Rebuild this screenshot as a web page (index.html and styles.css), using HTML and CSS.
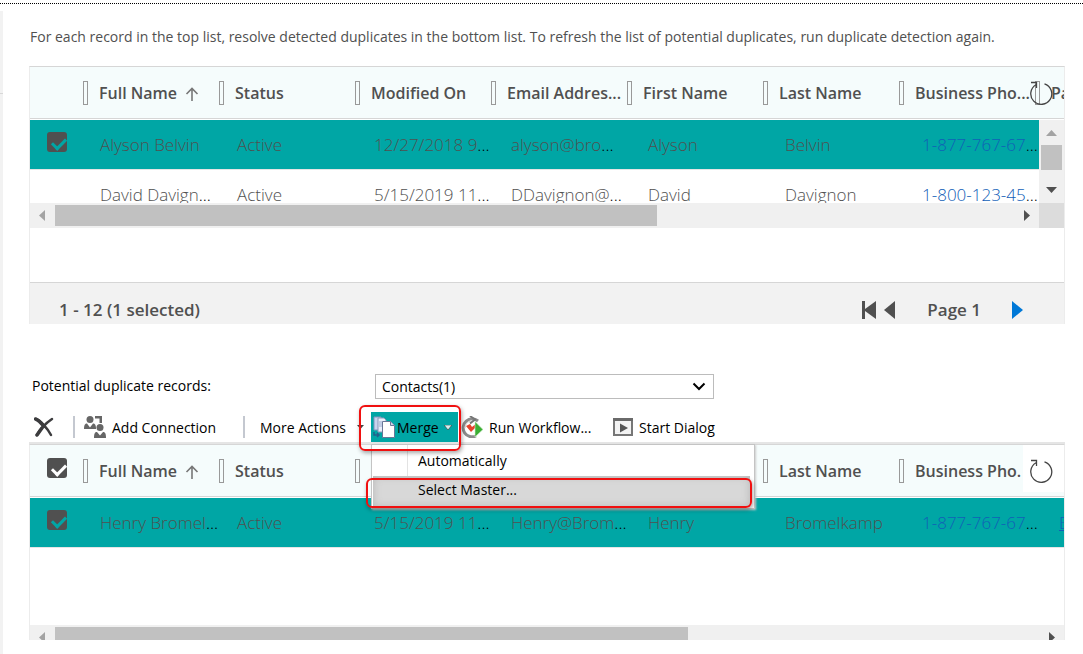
FILE: index.html
```html
<!DOCTYPE html>
<html lang="en">
<head>
<meta charset="utf-8">
<title>Duplicate records</title>
<link rel="stylesheet" href="styles.css">
</head>
<body>
<div class="top-rule"></div>
<div class="page">
<aside class="rail"><div class="rail-line"></div></aside>
<main class="content">
  <p class="intro">For each record in the top list, resolve detected duplicates in the bottom list. To refresh the list of potential duplicates, run duplicate detection again.</p>

  <section class="panel panel-top">
    <button class="refresh" aria-label="Refresh"><svg width="24" height="26" viewBox="0 0 24 26"><path d="M15.500 3.800A10.500 10.500 0 1 1 7 4.700M2 2.500h5.500v5.500" fill="none" stroke="#444" stroke-width="1.300"/></svg></button>
    <div class="grid-body">
      <table class="grid">
        <thead><tr>
          <th class="pick"></th>
          <th>Full Name <svg class="sort" width="14" height="16" viewBox="0 0 14 16"><path d="M7 15V2.500M1.500 8L7 2.500L12.500 8" fill="none" stroke="#777" stroke-width="1.600"/></svg></th>
          <th>Status</th><th>Modified On</th><th>Email Addres...</th><th>First Name</th><th>Last Name</th><th>Business Pho...</th><th>Parent</th>
        </tr></thead>
        <tbody>
          <tr class="selected"><td class="pick"><input type="checkbox" checked aria-label="Alyson Belvin"></td><td>Alyson Belvin</td><td>Active</td><td>12/27/2018 9<i>...</i></td><td>alyson@bro<i>...</i></td><td>Alyson</td><td>Belvin</td><td><a href="#">1-877-767-67</a><i>...</i></td><td></td></tr>
          <tr><td class="pick"></td><td>David Davign<i>...</i></td><td>Active</td><td>5/15/2019 11<i>...</i></td><td>DDavignon@<i>...</i></td><td>David</td><td>Davignon</td><td><a href="#">1-800-123-45</a><i>...</i></td><td></td></tr>
        </tbody>
      </table>
      <div class="vbar"><svg width="11" height="6" viewBox="0 0 11 6"><path d="M0 6L5.500 0L11 6z" fill="#a3a3a3"/></svg><div class="vthumb"></div><svg width="11" height="6" viewBox="0 0 11 6"><path d="M0 0L5.500 6L11 0z" fill="#505050"/></svg></div>
    </div>
    <div class="hbar"><div class="htrack"><svg width="6" height="11" viewBox="0 0 6 11"><path d="M6 0L0 5.500L6 11z" fill="#a3a3a3"/></svg><div class="hrun"><div class="hthumb" style="width:62.800%"></div></div><svg width="6" height="11" viewBox="0 0 6 11"><path d="M0 0L6 5.500L0 11z" fill="#505050"/></svg></div><div class="corner"></div></div>
    <footer class="pager">
      <span class="count">1 - 12 (1 selected)</span>
      <nav class="pages">
        <button aria-label="First page"><svg width="14" height="20" viewBox="0 0 14 20"><path d="M0 1h3v8L14 1v18L3 11v8H0z" fill="#505050"/></svg></button>
        <button aria-label="Previous page"><svg width="11" height="20" viewBox="0 0 11 20"><path d="M11 1v18L0 10z" fill="#505050"/></svg></button>
        <span class="page-no">Page 1</span>
        <button aria-label="Next page"><svg width="11" height="20" viewBox="0 0 11 20"><path d="M0 1v18L11 10z" fill="#0078d7"/></svg></button>
      </nav>
    </footer>
  </section>

  <div class="chooser">
    <label for="kind">Potential duplicate records:</label>
    <div class="select-box"><select id="kind"><option>Contacts(1)</option></select><svg width="14" height="9" viewBox="0 0 14 9"><path d="M1.500 1.500L7 7L12.500 1.500" fill="none" stroke="#000" stroke-width="2"/></svg></div>
  </div>

  <div class="toolbar">
    <button class="tool tool-delete" aria-label="Delete"><svg width="20" height="20" viewBox="0 0 20 20"><path d="M2 2c4 1 12 10 15 16M18 2C12 6 5 13 3 18" fill="none" stroke="#3c3c3e" stroke-width="2.500" stroke-linecap="round"/><path d="M1.500 2C5 3 8 7 10 9.500M8 11l-5 7" fill="none" stroke="#3c3c3e" stroke-width="3.500" stroke-linecap="round"/></svg></button>
    <span class="divider"></span>
    <button class="tool tool-add"><svg width="22" height="22" viewBox="0 0 22 22" fill="#666"><circle cx="6" cy="3.500" r="3.500"/><path d="M0 13c0-4 1-5.500 3-5.500l3 4 3-4c2 0 3 1.500 3 5.500zM11 0h7v7h-2.500V2.500H11z"/><circle cx="16" cy="11.500" r="3.500"/><path d="M10 22c0-5 1-6 3-6l3 3.500 3-3.500c2 0 3 1.500 3 6z"/></svg>Add Connection</button>
    <span class="divider"></span>
    <button class="tool tool-more">More Actions<svg width="7" height="4" viewBox="0 0 7 4"><path d="M0 0h7L3.500 4z" fill="#444"/></svg></button>
    <div class="merge">
      <button class="merge-button" aria-expanded="true"><svg width="22" height="22" viewBox="0 0 22 22"><path d="M1 1h7v13H1z" fill="#c8d4ee" stroke="#8094bd"/><path d="M5 2h6l2 2v12H5z" fill="#e8eefb" stroke="#8b98b8"/><path d="M6 6h3M6 8h3M6 10h3" stroke="#9aaace"/><path d="M9.500 5.500h8l4 4v12h-12z" fill="#fff" stroke="#697797"/><path d="M17.500 5.500v4h4" fill="#c9d4e9" stroke="#697797"/><path d="M1 16v3h5M4 17l2 2-2 2" fill="none" stroke="#23608c" stroke-width="1.500"/></svg>Merge<svg class="caret" width="8" height="5" viewBox="0 0 8 5"><path d="M0 0h8L4 5z" fill="#d7eeee" stroke="#333" stroke-width=".6"/></svg></button>
      <div class="menu" role="menu">
        <button class="menu-item" role="menuitem">Automatically</button>
        <button class="menu-item active" role="menuitem">Select Master...</button>
        <span class="mark mark-item"></span>
      </div>
      <span class="mark mark-button"></span>
    </div>
    <button class="tool tool-run"><svg width="22" height="22" viewBox="0 0 22 22"><path d="M17 5A9 9 0 1 0 15 20" fill="none" stroke="#8c8c8c" stroke-width="3"/><path d="M4 12a7 7 0 0 1 6-7" fill="none" stroke="#d0d0d0"/><path d="M9 0l5 3.500-5 4" fill="none" stroke="#777" stroke-width="2"/><path d="M5 10l4-2 2 3 5-4-2 5-4 4z" fill="#e5432d"/><path d="M14 5.500l8 8-8 7.500z" fill="#3caf35" stroke="#d9efd2" stroke-width=".6"/></svg>Run Workflow...</button>
    <button class="tool"><svg width="20" height="18" viewBox="0 0 20 18"><path d="M1 1h18v16H1z" fill="#f3f3f3" stroke="#777" stroke-width="2"/><path d="M0 0h20v3H0z" fill="#6a6a6a"/><path d="M7 5.500v9l8-4.500z" fill="#555"/></svg>Start Dialog</button>
  </div>

  <section class="panel panel-bottom">
    <button class="refresh solid" aria-label="Refresh"><svg width="24" height="26" viewBox="0 0 24 26"><path d="M15.500 3.800A10.500 10.500 0 1 1 7 4.700M2 2.500h5.500v5.500" fill="none" stroke="#444" stroke-width="1.300"/></svg></button>
    <div class="grid-body">
      <table class="grid">
        <thead><tr>
          <th class="pick"><input type="checkbox" checked aria-label="Select all"></th>
          <th>Full Name <svg class="sort" width="14" height="16" viewBox="0 0 14 16"><path d="M7 15V2.500M1.500 8L7 2.500L12.500 8" fill="none" stroke="#777" stroke-width="1.600"/></svg></th>
          <th>Status</th><th>Modified On</th><th>Email Addres...</th><th>First Name</th><th>Last Name</th><th>Business Pho.</th><th></th>
        </tr></thead>
        <tbody>
          <tr class="selected"><td class="pick"><input type="checkbox" checked aria-label="Henry Bromelkamp"></td><td>Henry Bromel<i>...</i></td><td>Active</td><td>5/15/2019 11<i>...</i></td><td>Henry@Brom<i>...</i></td><td>Henry</td><td>Bromelkamp</td><td><a href="#">1-877-767-67</a><i>...</i></td><td><a class="under" href="#">B</a></td></tr>
        </tbody>
      </table>
    </div>
    <div class="hbar"><div class="htrack"><svg width="6" height="11" viewBox="0 0 6 11"><path d="M6 0L0 5.500L6 11z" fill="#a3a3a3"/></svg><div class="hrun"><div class="hthumb" style="width:64.300%"></div></div><svg width="6" height="11" viewBox="0 0 6 11"><path d="M0 0L6 5.500L0 11z" fill="#505050"/></svg></div></div>
  </section>
</main>
</div>
</body>
</html>
```
FILE: styles.css
```css
* { box-sizing: border-box; }
body {
  margin: 0;
  background: #fff;
  color: #000;
  font-family: "Open Sans", "Noto Sans", sans-serif;
  font-size: 14px;
  overflow: hidden;
}
button {
  font: inherit;
  color: inherit;
  background: none;
  border: 0;
  padding: 0;
  display: flex;
  align-items: center;
}
svg { display: block; flex: none; }

.top-rule { margin-top: 3px; border-top: 1px dotted #000; }
.page { display: flex; min-height: calc(100vh - 4px); padding-top: 7px; }
.rail { width: 3px; background: #f2f2f2; padding-top: 82px; }
.rail-line { height: 1px; background: #d8d8d8; }
.content { flex: 1; min-width: 0; padding: 15px 18px 0 26px; }
.intro {
  margin: 0 0 18px 1px;
  line-height: 22px;
  font-size: 14px;
  color: #505050;
  white-space: nowrap;
}

/* record lists */
.panel {
  position: relative;
  border: 1px solid #ececec;
  border-top-color: #d6d6d6;
  border-bottom: 0;
  overflow: hidden;
}
.grid-body { position: relative; overflow: hidden; }
.grid, .grid thead, .grid tbody { display: block; }
.grid tr { display: grid; width: max-content; min-width: 100%; white-space: nowrap; }
.grid thead tr {
  grid-template-columns: 53px repeat(8, 136px);
  height: 52px;
  background: #f5fcfc;
  border-bottom: 1px solid #d6d6d6;
  margin-bottom: 1px;
}
.grid tbody tr {
  grid-template-columns: 55px repeat(8, 137px);
  height: 50px;
  border-bottom: 1px solid #e5e5e5;
}
.grid th, .grid td {
  display: flex;
  align-items: center;
  padding: 0 0 0 15px;
  text-align: left;
}
.grid th { position: relative; padding-left: 16px; font-size: 16px; font-weight: 600; color: #505050; }
.grid th:not(.pick)::before {
  content: "";
  position: absolute;
  left: 0;
  top: 14px;
  width: 3px;
  height: 22px;
  border: 1px solid #999;
}
.grid td { font-size: 17px; font-weight: 350; color: #505050; }
.grid td i { font-style: normal; color: #000; }
.grid td a { color: #1160b7; text-decoration: none; }
.grid td a.under { text-decoration: underline; }
.grid .pick { padding: 0 0 6px 17px; }
.sort { margin: 3px 0 0 8px; }
.grid tr.selected { background: #00a6a5; background-clip: padding-box; }

input[type="checkbox"] {
  appearance: none;
  position: relative;
  width: 20px;
  height: 20px;
  margin: 0;
  border-radius: 3px;
  background: #505050;
  color: #fff;
}
.selected input[type="checkbox"] { color: #00a6a5; }
input[type="checkbox"]::after {
  content: "";
  position: absolute;
  left: 5px;
  top: 6px;
  width: 11px;
  height: 6px;
  border: solid currentColor;
  border-width: 0 0 3px 3px;
  transform: rotate(-45deg);
}

.refresh { position: absolute; top: 0; right: 0; z-index: 2; width: 41px; height: 47px; padding: 4px 0 0 6px; }
.refresh.solid { background: #fff; }

/* scroll bars */
.vbar {
  position: absolute;
  right: 0;
  top: 53px;
  bottom: 0;
  width: 25px;
  background: #f0f0f0;
  display: flex;
  flex-direction: column;
  align-items: center;
  justify-content: space-between;
  padding: 10px 0;
}
.vthumb { width: 21px; height: 25px; margin-bottom: 8px; background: #c1c1c1; }
.hbar { display: flex; height: 25px; position: relative; }
.htrack { flex: 1; display: flex; align-items: center; gap: 10px; padding: 2px 9px; background: #f0f0f0; }
.hrun { flex: 1; height: 21px; }
.hthumb { height: 21px; background: #c1c1c1; }
.corner { width: 25px; background: #dcdcdc; }

.panel-top .grid-body { height: 136px; }
.panel-top .pager { margin-top: 54px; }
.panel-bottom .grid-body { height: 180px; }
.panel-bottom .hbar { height: 15px; overflow: hidden; }
.panel-bottom .htrack { height: 25px; }

.pager {
  display: flex;
  align-items: center;
  justify-content: space-between;
  height: 42px;
  padding: 12px 41px 0 29px;
  background: #f2f2f2;
  border-top: 1px solid #d6d6d6;
  font-size: 17px;
  font-weight: 600;
  color: #505050;
}
.pages { display: flex; align-items: center; gap: 8px; }
.page-no { margin: 0 23px 0 24px; }

.chooser { display: flex; align-items: center; margin-top: 50px; padding-left: 3px; }
.chooser label { width: 343px; padding-bottom: 2px; }
.select-box { position: relative; width: 339px; }
.select-box select {
  appearance: none;
  display: block;
  width: 100%;
  height: 25px;
  padding: 0 6px 1px;
  border: 1px solid #bcbcbc;
  border-radius: 0;
  background: #fff;
  color: #000;
  font: inherit;
}
.select-box svg { position: absolute; right: 8px; top: 8px; pointer-events: none; }

/* command bar */
.toolbar {
  display: flex;
  align-items: center;
  height: 45px;
  padding: 13px 0 0 5px;
  border-bottom: 2px solid #e5e5e5;
  white-space: nowrap;
}
.tool { gap: 6px; }
.divider { width: 2px; height: 22px; background: #c4c8d0; }
.tool-delete { margin-right: 19px; }
.tool-add { width: 168px; padding-left: 9px; }
.tool-more { width: 126px; padding-left: 15px; gap: 11px; }
.tool-run { width: 155px; padding-left: 3px; }
.merge { position: relative; align-self: stretch; width: 87px; }
.merge-button { width: 100%; height: 30px; gap: 2px; padding: 0 6px 0 2px; background: #00a6a5; }
.merge-button .caret { margin-left: auto; }
.menu {
  position: absolute;
  left: 0;
  top: 32px;
  z-index: 5;
  width: 384px;
  padding: 0 4px 1px 1px;
  background: #fff;
  border: 1px solid #c4c4c4;
  box-shadow: 1px 1px 2px #ccc;
}
.menu-item { width: 100%; height: 31px; padding-left: 45px; background: linear-gradient(90deg, transparent 34px, #e3e3e3 34px, #e3e3e3 35px, transparent 35px); }
.menu-item.active { background: #d8d8d8; box-shadow: inset 0 0 8px #b5b5b5; padding-bottom: 4px; }

/* call-out frames */
.mark {
  position: absolute;
  z-index: 6;
  border: 2px solid #f01010;
  border-radius: 6px;
  box-shadow: 1px 2px 4px rgba(0, 0, 0, .35);
  pointer-events: none;
}
.mark-button { left: -12px; top: -7px; width: 102px; height: 46px; }
.mark-item { left: -6px; right: 2px; bottom: 0; height: 30px; }
```
